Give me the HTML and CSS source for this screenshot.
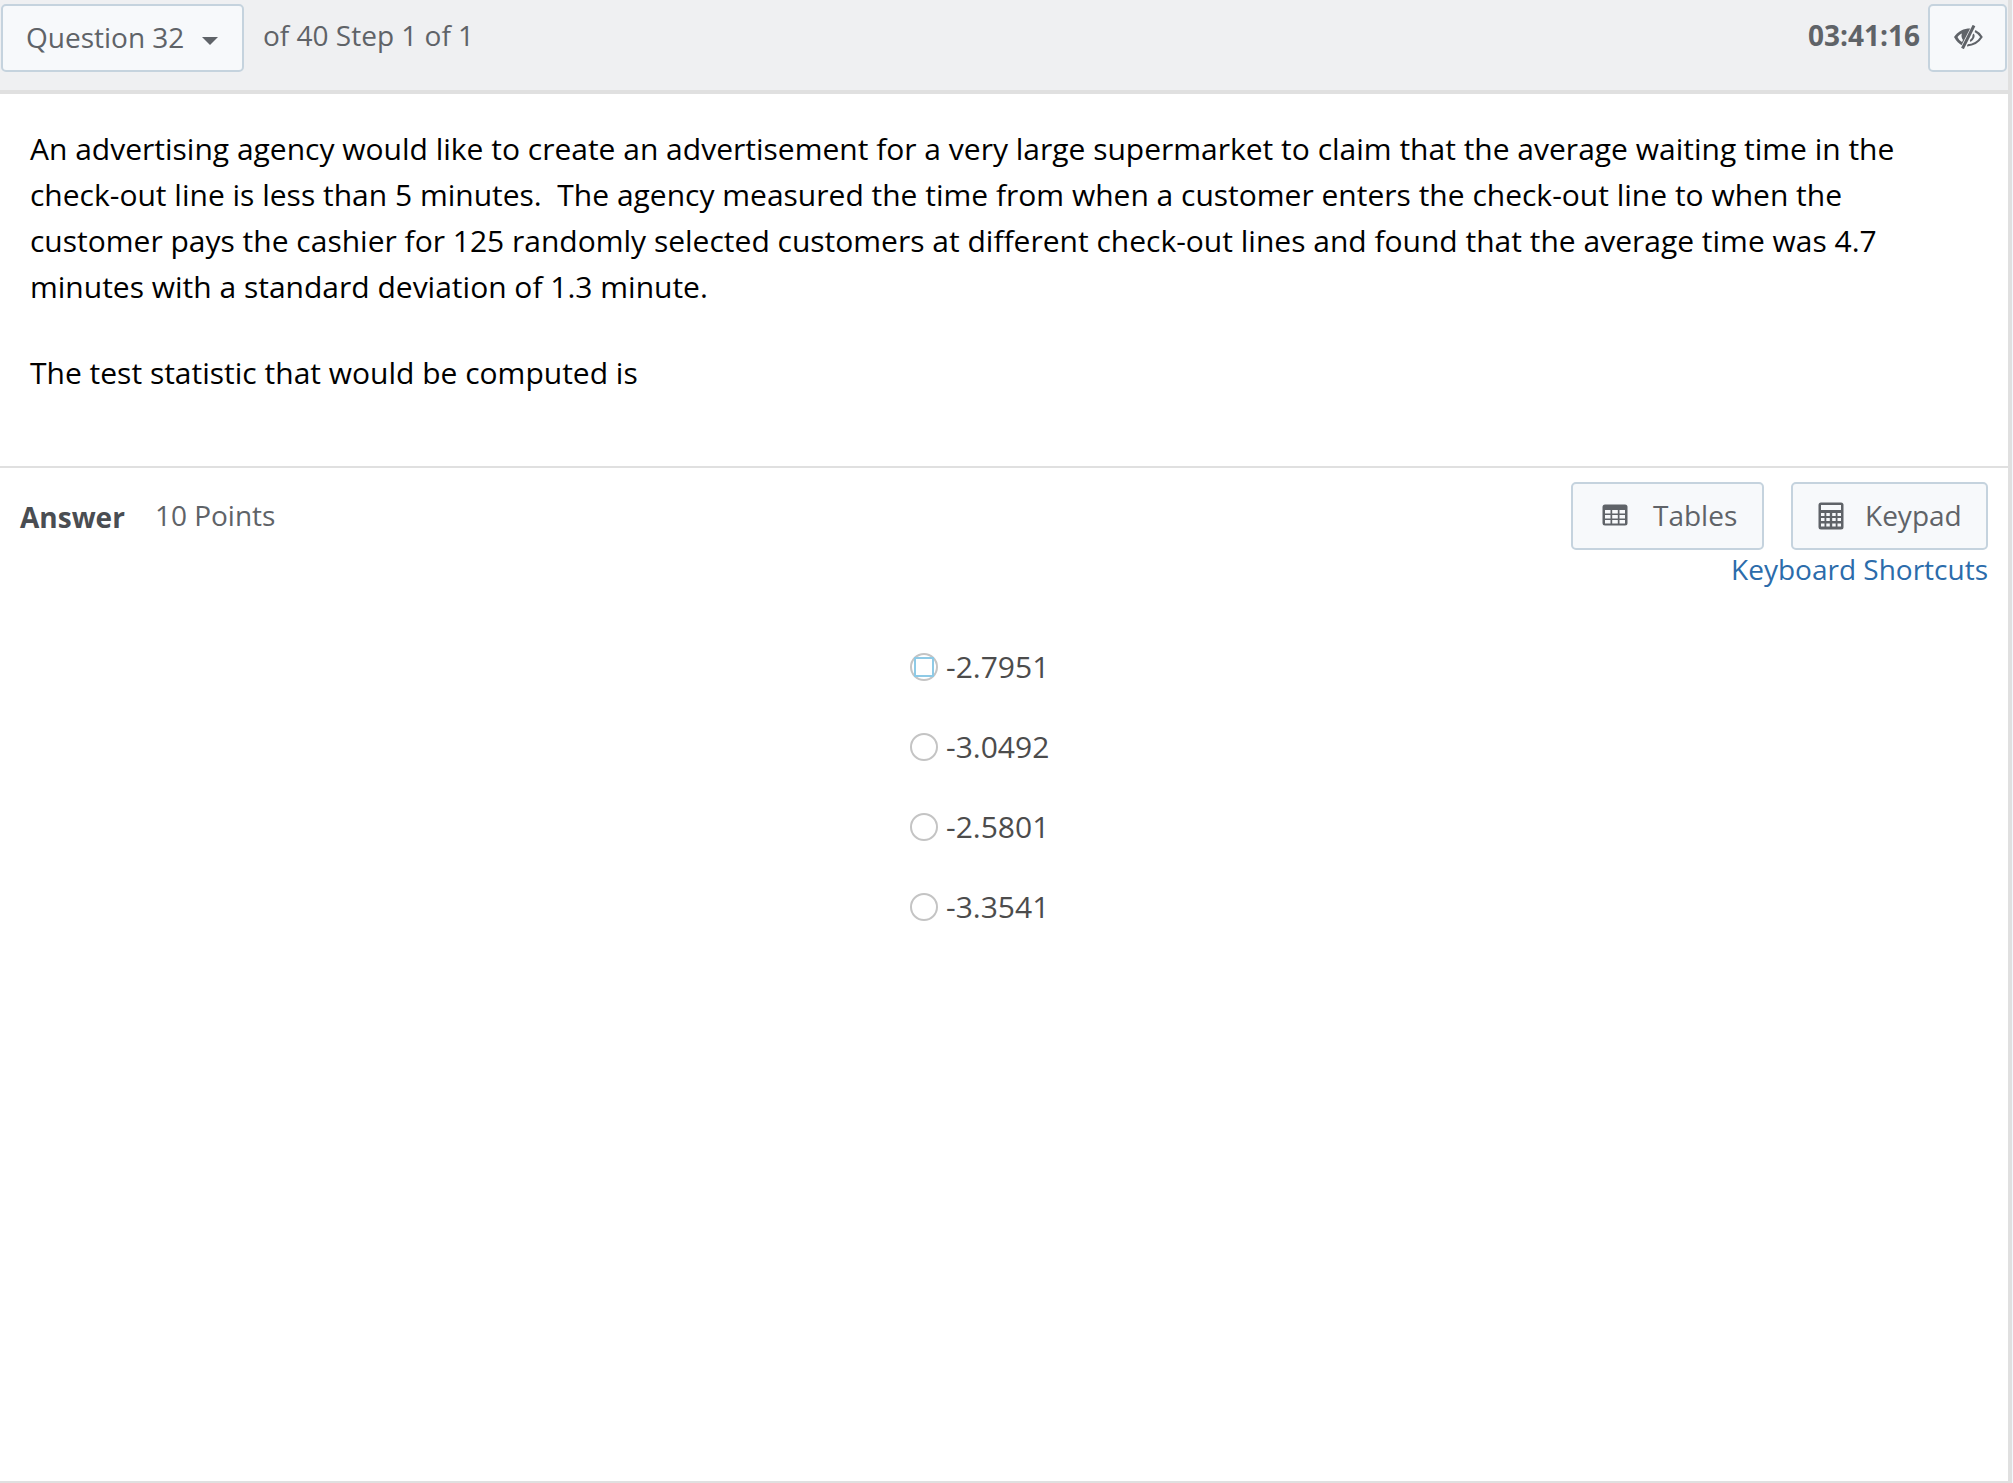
FILE: index.html
```html
<!DOCTYPE html>
<html lang="en">

<head>
    <meta charset="UTF-8">
    <meta name="viewport" content="width=device-width, initial-scale=1.0">
    <title>Question 32</title>
    <link rel="stylesheet" href="styles.css">
</head>

<body>
    <div class="page">
        <header class="topbar">
            <button class="btn question-select">Question 32 <span class="caret"></span></button>
            <span class="step">of 40 Step 1 of 1</span>
            <span class="timer">03:41:16</span>
            <button class="btn eye-btn" aria-label="Hide timer">
                <svg width="30" height="24" viewBox="0 0 30 24">
                    <path d="M1 12C5 6 11 3.500 17 3.500h2L10 21C6 19 3 16 1 12z" fill="#5f6368"/>
                    <path d="M4.500 12C6 10 7.500 9 9 8.500C8 10.500 8.500 13 10 15L9 17C7 16 5.500 14 4.500 12z" fill="#f7f9fb"/>
                    <path d="M22 6C25 7.500 27 9.500 28.500 12C26 16 21 20 14 20.300" fill="none" stroke="#5f6368" stroke-width="2.200"/>
                    <path d="M20 9C21 11 20.500 14 17 16" fill="none" stroke="#5f6368" stroke-width="2.200"/>
                    <path d="M21.500 0.500L10 23" stroke="#f7f9fb" stroke-width="5"/>
                    <path d="M21 0.500L9.500 23.500" stroke="#5f6368" stroke-width="3"/>
                </svg>
            </button>
        </header>

        <section class="question">
            <p>An advertising agency would like to create an advertisement for a very large supermarket to claim that the average waiting time in the check-out line is less than 5 minutes.&nbsp; The agency measured the time from when a customer enters the check-out line to when the customer pays the cashier for 125 randomly selected customers at different check-out lines and found that the average time was 4.7 minutes with a standard deviation of 1.3 minute.</p>
            <p>The test statistic that would be computed is</p>
        </section>

        <section class="answer">
            <div class="answer-head">
                <div class="answer-title">
                    <strong>Answer</strong>
                    <span class="points">10 Points</span>
                </div>
                <div class="tools">
                    <div class="tool-buttons">
                        <button class="btn tool-btn tables-btn">
                            <svg width="26" height="22" viewBox="0 0 26 22">
                                <rect x="0.500" y="0.500" width="25" height="21" rx="2.500" fill="#5f6368"/>
                                <g fill="#f7f9fb">
                                    <rect x="3" y="6" width="5.500" height="3.500"/>
                                    <rect x="10.200" y="6" width="5.600" height="3.500"/>
                                    <rect x="17.500" y="6" width="5.500" height="3.500"/>
                                    <rect x="3" y="11" width="5.500" height="3.500"/>
                                    <rect x="10.200" y="11" width="5.600" height="3.500"/>
                                    <rect x="17.500" y="11" width="5.500" height="3.500"/>
                                    <rect x="3" y="16" width="5.500" height="3.500"/>
                                    <rect x="10.200" y="16" width="5.600" height="3.500"/>
                                    <rect x="17.500" y="16" width="5.500" height="3.500"/>
                                </g>
                            </svg>
                            Tables
                        </button>
                        <button class="btn tool-btn keypad-btn">
                            <svg class="keypad-icon" width="26" height="28" viewBox="0 0 26 28">
                                <rect x="0.500" y="0.500" width="25" height="27" rx="2.500" fill="#5f6368"/>
                                <rect x="3" y="3" width="20" height="5" fill="#f7f9fb"/>
                                <g fill="#f7f9fb">
                                    <rect x="3" y="11" width="3.500" height="3"/>
                                    <rect x="8.300" y="11" width="3.500" height="3"/>
                                    <rect x="14.200" y="11" width="3.500" height="3"/>
                                    <rect x="19.500" y="11" width="3.500" height="3"/>
                                    <rect x="3" y="16" width="3.500" height="3"/>
                                    <rect x="8.300" y="16" width="3.500" height="3"/>
                                    <rect x="14.200" y="16" width="3.500" height="3"/>
                                    <rect x="19.500" y="16" width="3.500" height="3"/>
                                    <rect x="3" y="21.500" width="3.500" height="3"/>
                                    <rect x="8.300" y="21.500" width="3.500" height="3"/>
                                    <rect x="14.200" y="21.500" width="3.500" height="3"/>
                                    <rect x="19.500" y="21.500" width="3.500" height="3"/>
                                </g>
                            </svg>
                            Keypad
                        </button>
                    </div>
                    <a class="shortcuts" href="#">Keyboard Shortcuts</a>
                </div>
            </div>

            <ul class="choices">
                <li><span class="radio focused"></span>-2.7951</li>
                <li><span class="radio"></span>-3.0492</li>
                <li><span class="radio"></span>-2.5801</li>
                <li><span class="radio"></span>-3.3541</li>
            </ul>
        </section>
    </div>
</body>

</html>
```

FILE: styles.css
```css
/* General */
html,
body {
    margin: 0;
    padding: 0;
}

body {
    width: 2013px;
    height: 1483px;
    overflow: hidden;
    background-color: #f2f7fd;
    font-family: "Open Sans", sans-serif;
    color: #5f6368;
}

.page {
    box-sizing: border-box;
    width: 2012px;
    height: 1483px;
    background-color: #fff;
    border-right: 4px solid #e0e0e0;
    border-bottom: 2px solid #e0e0e0;
}

.btn {
    box-sizing: border-box;
    font-family: inherit;
    color: #5f6368;
    background-color: #f7f9fb;
    border: 2px solid #c5d3de;
    border-radius: 5px;
    padding: 0;
}

/* Top bar */
.topbar {
    box-sizing: border-box;
    display: flex;
    align-items: flex-start;
    height: 94px;
    padding: 4px 0 0 1px;
    background-color: #eff0f2;
    border-bottom: 4px solid #e0e0e0;
}

.question-select {
    width: 243px;
    height: 68px;
    font-size: 28px;
    text-align: left;
    padding: 0 0 2px 23px;
}

.caret {
    display: inline-block;
    width: 0;
    height: 0;
    margin-left: 10px;
    vertical-align: middle;
    border-left: 8px solid transparent;
    border-right: 8px solid transparent;
    border-top: 8px solid #5f6368;
}

.step {
    margin-left: 19px;
    font-size: 28px;
    line-height: 62px;
}

.timer {
    margin-left: auto;
    margin-right: 8px;
    font-size: 28px;
    font-weight: 700;
    line-height: 62px;
}

.eye-btn {
    width: 79px;
    height: 68px;
    margin-right: 1px;
    padding-top: 2px;
}

/* Question text */
.question {
    box-sizing: border-box;
    height: 374px;
    padding: 32px 30px 0;
    color: #000;
    font-size: 30px;
    line-height: 46px;
    border-bottom: 2px solid #e0e0e0;
}

.question p {
    margin: 0 0 40px;
}

/* Answer */
.answer-head {
    display: flex;
    justify-content: space-between;
    padding: 14px 20px 0;
}

.answer-title {
    display: flex;
    align-items: flex-start;
    font-size: 28px;
    line-height: 66px;
}

.answer-title strong {
    color: #4a4d52;
    padding-top: 2px;
}

.points {
    margin-left: 30px;
}

.tools {
    display: flex;
    flex-direction: column;
    align-items: flex-end;
}

.tool-buttons {
    display: flex;
    gap: 27px;
}

.tool-btn {
    display: flex;
    align-items: center;
    height: 68px;
    font-size: 28px;
    padding-bottom: 2px;
}

.tables-btn {
    width: 193px;
    padding-left: 29px;
    gap: 25px;
}

.keypad-btn {
    width: 197px;
    padding-left: 25px;
    gap: 21px;
}

.keypad-icon {
    margin-top: 2px;
}

.shortcuts {
    margin-top: -1px;
    font-size: 28px;
    line-height: 40px;
    color: #2b6cab;
    text-decoration: none;
}

.choices {
    list-style: none;
    margin: 37px 0 0;
    padding: 0 0 0 910px;
}

.choices li {
    display: flex;
    align-items: center;
    height: 80px;
    font-size: 30px;
    color: #4c4c4c;
}

.radio {
    box-sizing: border-box;
    display: flex;
    align-items: center;
    justify-content: center;
    width: 28px;
    height: 28px;
    margin-right: 8px;
    margin-top: 2px;
    border: 2px solid #c4c4c4;
    border-radius: 50%;
    background-color: #fff;
}

.radio.focused::after {
    content: "";
    box-sizing: border-box;
    width: 20px;
    height: 20px;
    border: 2px solid #8ecae6;
}
```
